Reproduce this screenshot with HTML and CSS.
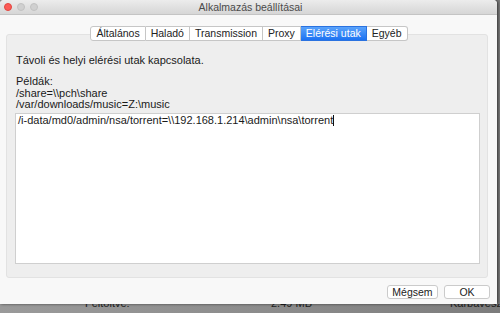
FILE: index.html
```html
<!DOCTYPE html>
<html lang="hu">
<head>
  <meta charset="UTF-8">
  <meta name="viewport" content="width=device-width, initial-scale=1.0">
  <title>Alkalmazás beállításai</title>
  <link rel="stylesheet" href="styles.css">
</head>
<body>
  <div class="desktop">
    <div class="window">
      <div class="titlebar">
        <div class="lights">
          <span class="light close"></span>
          <span class="light"></span>
          <span class="light"></span>
        </div>
        <div class="title">Alkalmazás beállításai</div>
      </div>

      <div class="content">
        <div class="tabs">
          <span class="tab">Általános</span>
          <span class="tab">Haladó</span>
          <span class="tab">Transmission</span>
          <span class="tab">Proxy</span>
          <span class="tab active">Elérési utak</span>
          <span class="tab">Egyéb</span>
        </div>

        <div class="panel">
          <p class="intro">Távoli és helyi elérési utak kapcsolata.</p>
          <p class="examples">Példák:<br>/share=\\pch\share<br>/var/downloads/music=Z:\music</p>
          <div class="editor">/i-data/md0/admin/nsa/torrent=\\192.168.1.214\admin\nsa\torrent<span class="caret"></span></div>
        </div>

        <div class="buttons">
          <button class="btn cancel">Mégsem</button>
          <button class="btn ok">OK</button>
        </div>
      </div>
    </div>

    <!-- list behind the dialog, mostly hidden -->
    <div class="behind">
      <span class="col-a">Feltöltve:</span>
      <span class="col-b">2.49 MB</span>
      <span class="col-c">Karbavesz</span>
    </div>
  </div>
</body>
</html>
```

FILE: styles.css
```css
body {
  margin: 0;
  padding: 0;
  font-family: "Liberation Sans", Arial, sans-serif;
  font-size: 11px;
  color: #1a1a1a;
  background: #8c8c8c;
  overflow: hidden;
}
.desktop {
  width: 500px;
  height: 313px;
  background: linear-gradient(to right, #9a9a9a, #8a8a8a 60%, #7c7c7c);
}
.window {
  width: 497px;
  height: 304px;
  background: #f8f8f8;
  border-radius: 4px 4px 0 0;
  box-shadow: 1px 0 3px rgba(0, 0, 0, 0.6);
  display: flex;
  flex-direction: column;
  position: relative;
  z-index: 2;
}
.titlebar {
  height: 14px;
  display: flex;
  align-items: center;
  background: linear-gradient(#ececec, #d6d6d6);
  border-bottom: 1px solid #c4c4c4;
  border-radius: 4px 4px 0 0;
}
.lights {
  display: flex;
  gap: 5px;
  padding-left: 4px;
  width: 70px;
}
.light {
  width: 8px;
  height: 8px;
  border-radius: 50%;
  background: #d0d0d0;
  border: 1px solid #c2c2c2;
  box-sizing: border-box;
}
.light.close {
  background: #fc5b57;
  border-color: #e2463f;
}
.title {
  flex: 1;
  text-align: center;
  padding-right: 70px;
  color: #4a4a4a;
  font-size: 10.5px;
}
.content {
  flex: 1;
  display: flex;
  flex-direction: column;
  padding: 11px 9px 0 6px;
}
.tabs {
  display: flex;
  justify-content: center;
  padding-left: 4px;
  margin-bottom: -7px;
  position: relative;
  z-index: 1;
}
.tab {
  height: 13px;
  line-height: 13px;
  padding: 0 5px;
  background: #fff;
  border: 1px solid #c6c6c6;
  border-left: none;
  font-size: 10.5px;
  color: #222;
}
.tab:first-child {
  border-left: 1px solid #c6c6c6;
  border-radius: 3px 0 0 3px;
}
.tab:last-child {
  border-radius: 0 3px 3px 0;
}
.tab.active {
  background: linear-gradient(#5aa3fb, #1c72f2);
  border-color: #2a72e0;
  color: #fff;
}
.panel {
  height: 244px;
  box-sizing: border-box;
  background: #eeeeee;
  border: 1px solid #e2e2e2;
  border-radius: 3px;
  padding: 18px 7px 13px 8px;
  display: flex;
  flex-direction: column;
}
.intro {
  margin: 0 0 9px 1px;
  line-height: 14px;
}
.examples {
  margin: 0 0 2px 1px;
  line-height: 11.5px;
}
.editor {
  flex: 1;
  background: #fff;
  border: 1px solid #cfcfcf;
  padding: 0 2px;
  line-height: 13px;
  white-space: nowrap;
}
.caret {
  display: inline-block;
  width: 1px;
  height: 11px;
  background: #111;
  vertical-align: -2px;
}
.buttons {
  display: flex;
  justify-content: flex-end;
  gap: 6px;
  padding: 7px 0 0;
}
.btn {
  height: 14px;
  padding: 0;
  font-family: "Liberation Sans", Arial, sans-serif;
  font-size: 10.5px;
  color: #222;
  background: #fff;
  border: 1px solid #cbcbcb;
  border-radius: 3px;
  line-height: 12px;
}
.cancel {
  width: 51px;
}
.ok {
  width: 46px;
  margin-right: -2px;
}
.behind {
  height: 9px;
  overflow: hidden;
  position: relative;
  font-size: 11px;
  color: #1e1e1e;
  line-height: 9px;
}
.behind span {
  position: absolute;
  top: -5px;
}
.col-a {
  left: 85px;
}
.col-b {
  left: 271px;
}
.col-c {
  left: 450px;
}
```
